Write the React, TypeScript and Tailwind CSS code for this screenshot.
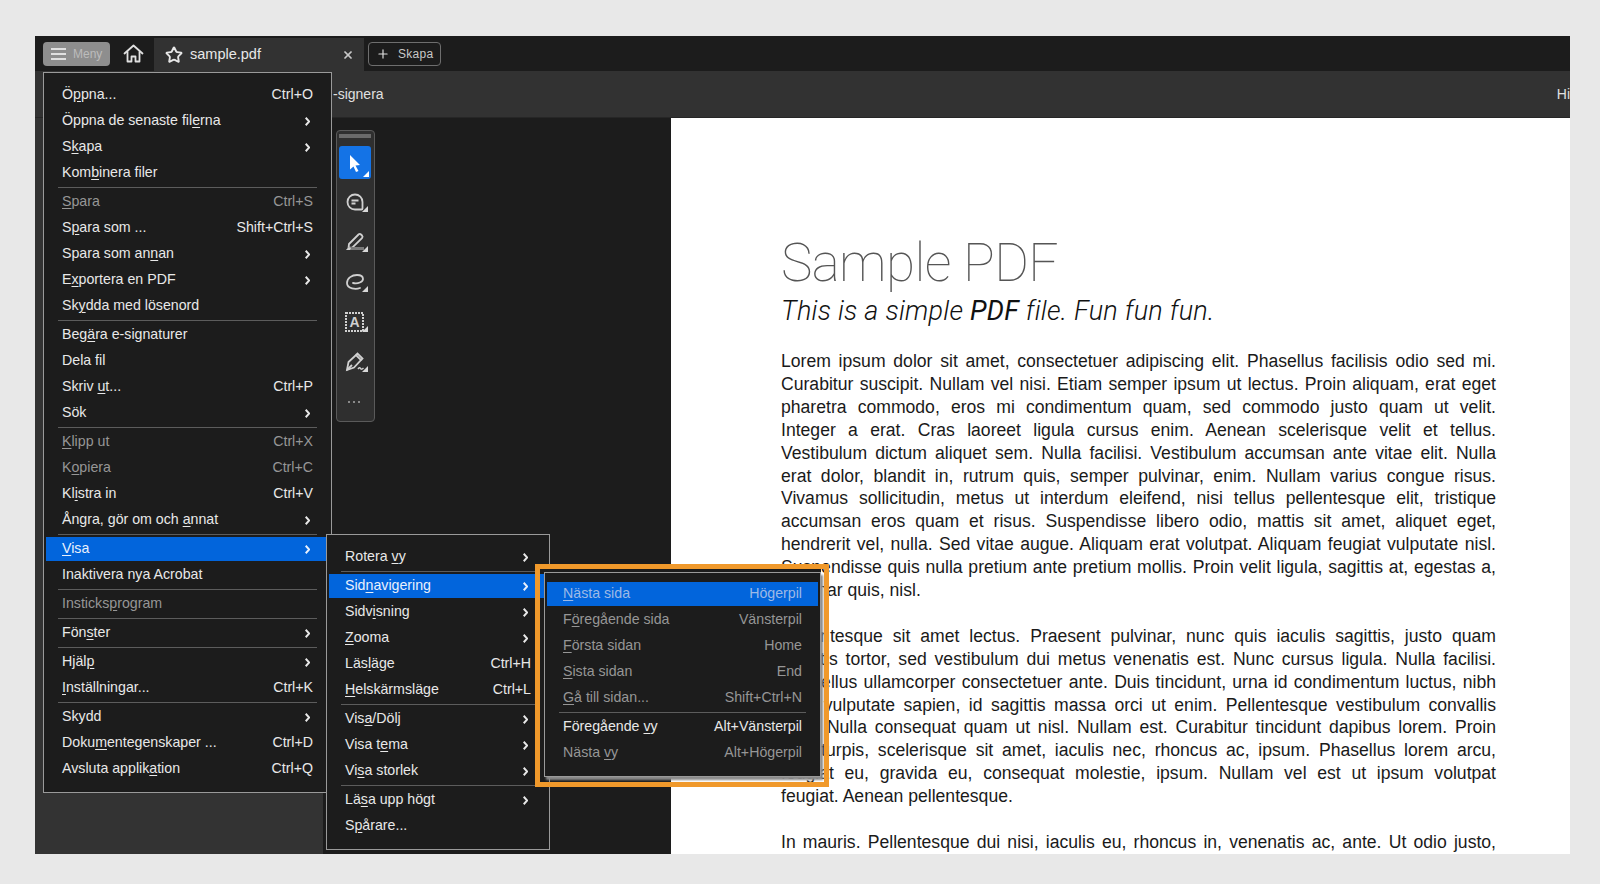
import type { ReactNode } from 'react';
import { Plus, Star, X } from 'lucide-react';

type Item = {
  label?: string;
  shortcut?: string;
  arrow?: boolean;
  off?: boolean;
  active?: boolean;
  sep?: boolean;
};

const mainMenu: Item[] = [
  { label: 'Ö&ppna...', shortcut: 'Ctrl+O' },
  { label: 'Öppna de senaste fil&erna', arrow: true },
  { label: 'S&kapa', arrow: true },
  { label: 'Kom&binera filer' },
  { sep: true },
  { label: '&Spara', shortcut: 'Ctrl+S', off: true },
  { label: 'S&para som ...', shortcut: 'Shift+Ctrl+S' },
  { label: 'Spara som an&nan', arrow: true },
  { label: 'E&xportera en PDF', arrow: true },
  { label: 'Sk&ydda med lösenord' },
  { sep: true },
  { label: 'Beg&ära e-signaturer' },
  { label: 'Dela fil' },
  { label: 'Skriv &ut...', shortcut: 'Ctrl+P' },
  { label: 'Sök', arrow: true },
  { sep: true },
  { label: '&Klipp ut', shortcut: 'Ctrl+X', off: true },
  { label: 'K&opiera', shortcut: 'Ctrl+C', off: true },
  { label: 'Kl&istra in', shortcut: 'Ctrl+V' },
  { label: 'Ångra, gör om och &annat', arrow: true },
  { sep: true },
  { label: '&Visa', arrow: true, active: true },
  { label: 'Inaktivera nya Acrobat' },
  { sep: true },
  { label: 'Insticks&program', off: true },
  { sep: true },
  { label: 'Fön&ster', arrow: true },
  { sep: true },
  { label: 'Hjäl&p', arrow: true },
  { label: '&Inställningar...', shortcut: 'Ctrl+K' },
  { sep: true },
  { label: 'Skydd', arrow: true },
  { label: 'Doku&mentegenskaper ...', shortcut: 'Ctrl+D' },
  { label: 'Avsluta applik&ation', shortcut: 'Ctrl+Q' },
];

const viewMenu: Item[] = [
  { label: 'Rotera &vy', arrow: true },
  { sep: true },
  { label: 'Sid&navigering', arrow: true, active: true },
  { label: 'Sidv&isning', arrow: true },
  { label: '&Zooma', arrow: true },
  { label: 'Läs&läge', shortcut: 'Ctrl+H' },
  { label: '&Helskärmsläge', shortcut: 'Ctrl+L' },
  { sep: true },
  { label: 'Vis&a/Dölj', arrow: true },
  { label: 'Visa t&ema', arrow: true },
  { label: 'Vi&sa storlek', arrow: true },
  { sep: true },
  { label: 'Lä&sa upp högt', arrow: true },
  { label: 'S&pårare...' },
];

const pageMenu: Item[] = [
  { label: '&Nästa sida', shortcut: 'Högerpil', off: true, active: true },
  { label: 'F&öregående sida', shortcut: 'Vänsterpil', off: true },
  { label: '&Första sidan', shortcut: 'Home', off: true },
  { label: '&Sista sidan', shortcut: 'End', off: true },
  { label: '&Gå till sidan...', shortcut: 'Shift+Ctrl+N', off: true },
  { sep: true },
  { label: 'Föregående &vy', shortcut: 'Alt+Vänsterpil' },
  { label: 'Nästa &vy', shortcut: 'Alt+Högerpil', off: true },
];

const para1 = [
  'Lorem ipsum dolor sit amet, consectetuer adipiscing elit. Phasellus facilisis odio sed mi.',
  'Curabitur suscipit. Nullam vel nisi. Etiam semper ipsum ut lectus. Proin aliquam, erat eget',
  'pharetra commodo, eros mi condimentum quam, sed commodo justo quam ut velit.',
  'Integer a erat. Cras laoreet ligula cursus enim. Aenean scelerisque velit et tellus.',
  'Vestibulum dictum aliquet sem. Nulla facilisi. Vestibulum accumsan ante vitae elit. Nulla',
  'erat dolor, blandit in, rutrum quis, semper pulvinar, enim. Nullam varius congue risus.',
  'Vivamus sollicitudin, metus ut interdum eleifend, nisi tellus pellentesque elit, tristique',
  'accumsan eros quam et risus. Suspendisse libero odio, mattis sit amet, aliquet eget,',
  'hendrerit vel, nulla. Sed vitae augue. Aliquam erat volutpat. Aliquam feugiat vulputate nisl.',
  'Suspendisse quis nulla pretium ante pretium mollis. Proin velit ligula, sagittis at, egestas a,',
];

const para2 = [
  'Pellentesque sit amet lectus. Praesent pulvinar, nunc quis iaculis sagittis, justo quam',
  'lobortis tortor, sed vestibulum dui metus venenatis est. Nunc cursus ligula. Nulla facilisi.',
  'Phasellus ullamcorper consectetuer ante. Duis tincidunt, urna id condimentum luctus, nibh',
  'ante vulputate sapien, id sagittis massa orci ut enim. Pellentesque vestibulum convallis',
  'sem. Nulla consequat quam ut nisl. Nullam est. Curabitur tincidunt dapibus lorem. Proin',
  'velit turpis, scelerisque sit amet, iaculis nec, rhoncus ac, ipsum. Phasellus lorem arcu,',
  'feugiat eu, gravida eu, consequat molestie, ipsum. Nullam vel est ut ipsum volutpat',
];

function Label({ text }: { text: string }) {
  const [before, after] = text.split('&');
  if (after === undefined) return <span>{text}</span>;
  return (
    <span>
      {before}
      <u className="underline-offset-2">{after[0]}</u>
      {after.slice(1)}
    </span>
  );
}

function Chevron() {
  return (
    <svg width="5" height="9" viewBox="0 0 5 9" className="mr-[3px]" fill="none" stroke="currentColor" strokeWidth="2">
      <path d="M.7.8l3.500 3.700L.7 8.200" />
    </svg>
  );
}

function MenuRows({ items }: { items: Item[] }) {
  return (
    <>
      {items.map((item, i) => {
        if (item.sep) {
          return (
            <div key={i} className="mx-[14px] h-[3px] pt-[2px]">
              <div className="h-px bg-[#5c5c5c]" />
            </div>
          );
        }
        let tone = item.off ? 'text-[#969696]' : 'text-[#e8e8e8]';
        if (item.active) tone = item.off ? 'text-[#9db9e6]' : 'text-[#e8f0fc]';
        return (
          <div
            key={i}
            className={
              item.active
                ? `mx-[2px] mt-[2px] flex h-6 items-center justify-between bg-[#0265dc] pl-4 pr-4 ${tone}`
                : `mx-[2px] flex h-[26px] items-center justify-between pl-4 pr-4 pt-[2px] ${tone}`
            }
          >
            <Label text={item.label ?? ''} />
            {item.shortcut && <span>{item.shortcut}</span>}
            {item.arrow && <Chevron />}
          </div>
        );
      })}
    </>
  );
}

function ToolIcon({ children }: { children: ReactNode }) {
  return (
    <div className="relative mt-[1px] flex h-[39px] w-8 items-center justify-center text-[#d0d0d0]">
      {children}
      <span className="absolute bottom-[9px] right-[3px] h-0 w-0 border-b-[6px] border-l-[6px] border-b-[#d8d8d8] border-l-transparent" />
    </div>
  );
}

function Palette() {
  return (
    <div className="flex h-[292px] w-[39px] flex-col rounded-[4px] border border-[#5a5a5a] bg-[#2f2f2f] pl-[2px] pt-[3px]">
      <div className="h-1 w-8 bg-[#6a6a6a]" />
      <div className="relative mb-[2px] mt-[8px] flex h-[33px] w-8 items-center justify-center rounded-[3px] bg-[#1473e6] text-white">
        <svg width="18" height="20" viewBox="0 0 18 20" fill="currentColor">
          <path d="M4 2l10 10-4.500.5 3 5.500-2.500 1-2.500-5.500-3.500 3z" />
        </svg>
        <span className="absolute bottom-[2px] right-[2px] h-0 w-0 border-b-[6px] border-l-[6px] border-b-white border-l-transparent" />
      </div>
      <ToolIcon>
        <svg width="22" height="22" viewBox="0 0 22 22" fill="none" stroke="currentColor" strokeWidth="1.800">
          <path d="M11 3.500a7.500 7.500 0 1 0 0 15h6.500a1 1 0 0 0 1-1V11A7.500 7.500 0 0 0 11 3.500z" />
          <path d="M7.500 9.500h7M7.500 12.500h4" />
        </svg>
      </ToolIcon>
      <ToolIcon>
        <svg width="22" height="22" viewBox="0 0 22 22" fill="none" stroke="currentColor" strokeWidth="1.800">
          <path d="M5 13L14.500 3.500a1.800 1.800 0 0 1 2.500 0l1 1a1.800 1.800 0 0 1 0 2.500L8.500 16.500 4.500 17z" />
          <path d="M2 19l3-3h15v3z" fill="#7a7a7a" stroke="none" />
          <path d="M2 19l3-3 2 1-1 2z" fill="currentColor" stroke="none" />
        </svg>
      </ToolIcon>
      <ToolIcon>
        <svg width="22" height="22" viewBox="0 0 22 22" fill="none" stroke="currentColor" strokeWidth="1.800" strokeLinecap="round">
          <path d="M16 17c-4 1.500-13 1-13-5C3 7 8 4 13 4c4 0 6 2 6 4 0 3-5 5-10 4" />
        </svg>
      </ToolIcon>
      <ToolIcon>
        <svg width="22" height="22" viewBox="0 0 22 22" fill="none" stroke="currentColor">
          <rect x="2" y="2" width="17" height="18" strokeWidth="2" strokeDasharray="2 1" />
          <text x="10.500" y="16" textAnchor="middle" fontSize="14" fontWeight="700" fill="currentColor" stroke="none" fontFamily="Liberation Sans">
            A
          </text>
        </svg>
      </ToolIcon>
      <ToolIcon>
        <svg width="22" height="22" viewBox="0 0 22 22" fill="none" stroke="currentColor" strokeWidth="1.800">
          <path d="M3 19l1.500-8L12 4l5 5-7 7.500z" />
          <path d="M12 4l1.500-1.500 5 5L17 9" />
          <path d="M3 19l5-5" />
          <path d="M14 18c1-1.500 2-1.500 2.500-.5s1.500.8 3-.5" strokeWidth="1.500" />
        </svg>
      </ToolIcon>
      <div className="ml-[9px] mt-[20px] flex gap-[3px]">
        <span className="h-[2px] w-[2px] rounded-full bg-[#a8a8a8]" />
        <span className="h-[2px] w-[2px] rounded-full bg-[#a8a8a8]" />
        <span className="h-[2px] w-[2px] rounded-full bg-[#a8a8a8]" />
      </div>
    </div>
  );
}

function Document() {
  return (
    <div className="flex-1 overflow-hidden bg-white pl-[110px] pr-[74px] pt-[115px] text-[#1a1a1a]">
      <h1 className="font-['Roboto',sans-serif] text-[53px] font-thin leading-[60px] tracking-[-0.6px] text-[#555]">
        Sample PDF
      </h1>
      <p className="font-['Roboto',sans-serif] text-[27px] font-light italic leading-[36px] tracking-[0.25px] text-[#111]">
        This is a simple <span className="font-normal">PDF</span> file. Fun fun fun.
      </p>
      <div className="mt-[21px] text-[17.6px] leading-[22.9px]">
        {para1.map((line) => (
          <p key={line} className="text-justify [text-align-last:justify]">
            {line}
          </p>
        ))}
        <p>pulvinar quis, nisl.</p>
        <div className="h-[22.9px]" />
        {para2.map((line) => (
          <p key={line} className="text-justify [text-align-last:justify]">
            {line}
          </p>
        ))}
        <p>feugiat. Aenean pellentesque.</p>
        <div className="h-[22.9px]" />
        <p className="text-justify [text-align-last:justify]">
          In mauris. Pellentesque dui nisi, iaculis eu, rhoncus in, venenatis ac, ante. Ut odio justo,
        </p>
      </div>
    </div>
  );
}

export default function App() {
  return (
    <div className="h-screen overflow-hidden bg-[#e8e8e8] pl-[35px] pt-[36px] font-['Liberation_Sans',Arial,sans-serif] text-[14.2px]">
      <div className="relative flex h-[818px] w-[1535px] flex-col overflow-hidden">
        {/* Tab strip */}
        <div className="flex h-[35px] shrink-0 items-start bg-[#1c1c1c]">
          <div className="ml-2 mt-[6px] flex h-6 w-[67px] items-center gap-[7px] rounded-[4px] bg-[#8e8e8e] pl-[8px] text-xs text-[#bcbcbc]">
            <svg width="15" height="12" viewBox="0 0 15 12" fill="#e0e0e0">
              <rect y="0" width="15" height="2" />
              <rect y="5" width="15" height="2" />
              <rect y="10" width="15" height="2" />
            </svg>
            Meny
          </div>
          <div className="ml-[13px] mt-[7px] text-[#e0e0e0]">
            <svg width="21" height="21" viewBox="0 0 21 21" fill="none" stroke="currentColor" strokeWidth="1.800" strokeLinejoin="round" strokeLinecap="round">
              <path d="M1.500 10.500L10.500 2.500l9 8" />
              <path d="M4.500 9v9.500h4V13.500h4v5h4V9" />
            </svg>
          </div>
          <div className="ml-[10px] mt-[2px] flex h-[33px] w-[210px] items-center bg-[#323232] pl-[11px] text-[#e8e8e8]">
            <Star size={18} strokeWidth={2.500} />
            <span className="ml-[7px] text-[14.5px]">sample.pdf</span>
            <X size={12} strokeWidth={3.500} className="ml-auto mr-[10px] text-[#c8c8c8]" />
          </div>
          <div className="ml-1 mt-[6px] flex h-6 w-[73px] items-center rounded-[4px] border border-[#6e6e6e] pl-[7px] text-xs tracking-[0.3px] text-[#c8c8c8]">
            <Plus size={14} strokeWidth={2} className="text-[#e0e0e0]" />
            <span className="ml-[8px]">Skapa</span>
          </div>
        </div>

        {/* Tool row */}
        <div className="flex h-[47px] shrink-0 items-center justify-between border-b border-[#262626] bg-[#323232] pl-[298px] pt-[1px] text-[14px] text-[#e0e0e0]">
          <span>-signera</span>
          <span>Hi</span>
        </div>

        {/* Body */}
        <div className="flex min-h-0 flex-1">
          <div className="w-[288px] shrink-0 bg-[#333]" />
          <div className="w-[348px] shrink-0 bg-[#1c1c1c] pl-[13px] pt-[12px]">
            <Palette />
          </div>
          <Document />
        </div>

        {/* Menus */}
        <div className="absolute left-[8px] top-[36px] w-[289px] border border-[#9a9a9a] bg-[#1c1c1c] pb-[11px] pt-2">
          <MenuRows items={mainMenu} />
        </div>
        <div className="absolute left-[291px] top-[498px] w-[224px] border border-[#9a9a9a] bg-[#1c1c1c] pb-[11px] pt-2">
          <MenuRows items={viewMenu} />
        </div>
        <div className="absolute left-[509px] top-[536px] w-[277px] border border-[#9a9a9a] bg-[#1c1c1c] pb-[11px] pt-[7px] shadow-[0_-3px_0_#1c1c1c,2px_3px_2px_#8a8a8a]">
          <MenuRows items={pageMenu} />
        </div>

        {/* Callout frame */}
        <div className="pointer-events-none absolute left-[500px] top-[528px] h-[223px] w-[294px] border-[5px] border-[#f0992b]" />
      </div>
    </div>
  );
}
